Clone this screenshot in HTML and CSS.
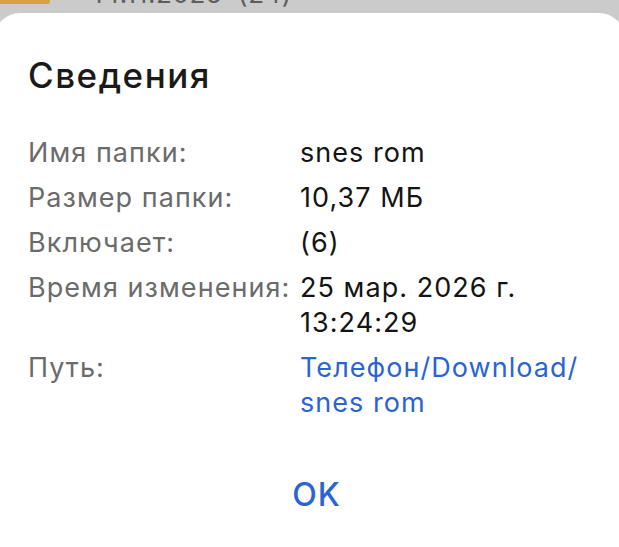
FILE: index.html
```html
<!DOCTYPE html>
<html lang="ru">
<head>
<meta charset="utf-8">
<link rel="stylesheet" href="styles.css">
</head>
<body>
<div class="behind">
  <div class="behind-row">
    <span class="folder-tab"></span>
    <span class="behind-text">14.11.2025&nbsp;&nbsp;(24)</span>
  </div>
</div>
<div class="sheet">
  <h1 class="title">Сведения</h1>
  <dl class="info">
    <dt>Имя папки:</dt><dd>snes rom</dd>
    <dt>Размер папки:</dt><dd>10,37 МБ</dd>
    <dt>Включает:</dt><dd>(6)</dd>
    <dt>Время изменения:</dt><dd>25 мар. 2026 г.<br>13:24:29</dd>
    <dt>Путь:</dt><dd class="link">Телефон/Download/<br>snes rom</dd>
  </dl>
  <div class="actions"><button class="ok">OK</button></div>
</div>
</body>
</html>
```
FILE: styles.css
```css
html, body {
  margin: 0;
  padding: 0;
}
body {
  background: #cbcbcb;
  font-family: Inter, Roboto, "Noto Sans", sans-serif;
  height: 547px;
  overflow: hidden;
}
.behind {
  height: 13px;
  overflow: hidden;
}
.behind-row {
  display: flex;
  align-items: flex-start;
  gap: 42px;
}
.folder-tab {
  display: block;
  width: 50px;
  height: 4px;
  background: #d4a33f;
  border-radius: 0 0 3px 0;
}
.behind-text {
  display: block;
  margin-top: -21px;
  font-size: 26px;
  line-height: 30px;
  letter-spacing: 0.6px;
  color: #5e5e5e;
  white-space: pre;
}
.sheet {
  margin: 0 -6px;
  background: #ffffff;
  border-radius: 26px 26px 0 0;
  padding: 42px 34px 0;
  height: 534px;
  box-sizing: border-box;
}
.title {
  margin: 0;
  font-size: 35px;
  line-height: 40px;
  font-weight: 500;
  letter-spacing: 1.5px;
  color: #1a1a1a;
}
.info {
  margin: 40px 0 0;
  display: grid;
  grid-template-columns: 272px 1fr;
  row-gap: 10px;
  font-size: 27px;
  line-height: 35px;
  letter-spacing: 1.05px;
}
.info dt {
  color: #6b6b6b;
  white-space: nowrap;
}
.info dd {
  margin: 0;
  color: #141414;
  white-space: nowrap;
}
.info dd.link {
  color: #2a64d4;
}
.actions {
  display: flex;
  justify-content: center;
  margin-top: 55px;
  padding-left: 14px;
}
.ok {
  border: 0;
  background: none;
  padding: 0;
  font-family: inherit;
  font-size: 32px;
  line-height: 40px;
  font-weight: 500;
  letter-spacing: 1px;
  color: #2a64d4;
}
```
